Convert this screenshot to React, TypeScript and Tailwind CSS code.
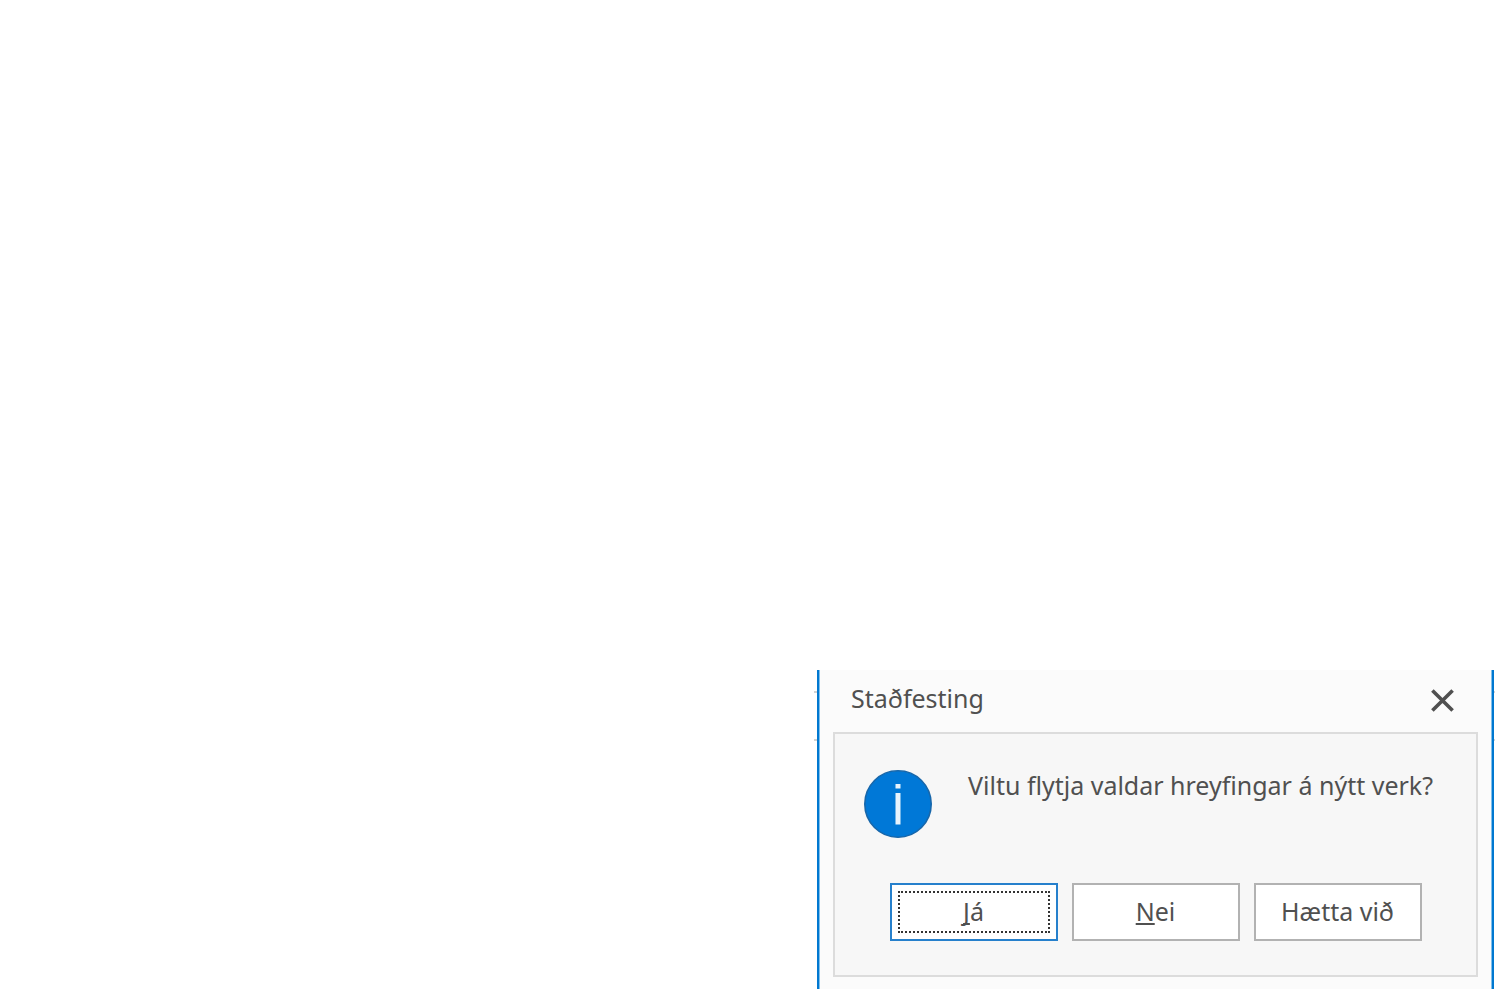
import { useState } from "react";

function EdgeMarks({ side }: { side: "left" | "right" }) {
  return (
    <div
      aria-hidden="true"
      className={
        side === "left"
          ? "flex w-[3px] flex-col gap-[46px] pt-[21px]"
          : "flex w-px flex-col gap-[46px] pt-[21px]"
      }
    >
      <span className="h-[2px] w-full bg-[#d2d2d2]" />
      <span className="h-[2px] w-full bg-[#d2d2d2]" />
    </div>
  );
}

function InfoIcon() {
  return (
    <svg aria-hidden="true" viewBox="0 0 68 68" className="size-[68px] shrink-0">
      <circle cx="34" cy="34" r="33.2" fill="#0078d7" stroke="#1767ab" strokeWidth="1.6" />
      <rect x="31.5" y="14" width="5" height="4.5" fill="#e8f3fc" />
      <rect x="31.5" y="23" width="5" height="31.5" fill="#e8f3fc" />
    </svg>
  );
}

function AccessKey({ children }: { children: string }) {
  return (
    <u className="decoration-2 underline-offset-2 [text-decoration-skip-ink:none]">{children}</u>
  );
}

const buttonClass =
  "h-[58px] w-[168px] border-2 border-[#b2b2b2] bg-white px-[6px] pt-[5px] pb-[7px] focus:outline-none";

export default function App() {
  const [open, setOpen] = useState(true);
  const close = () => setOpen(false);

  return (
    <main className="flex min-h-screen items-end justify-end bg-white font-['Noto_Sans','Open_Sans',sans-serif] text-[25px] leading-8 text-[#505050]">
      {open && (
        <div className="flex">
          <EdgeMarks side="left" />
          <section
            role="dialog"
            aria-labelledby="dialog-title"
            aria-describedby="dialog-message"
            className="border-x-2 border-[#0078d0] bg-[#fbfbfb]"
          >
            <div className="border-x border-[#80bfeb] px-[13px] pb-3">
              <header className="flex h-[62px] items-center justify-between pr-6 pb-[2px] pl-[18px]">
                <h1 id="dialog-title" className="pb-1">
                  Staðfesting
                </h1>
                <button type="button" aria-label="Loka" onClick={close} className="size-[23px]">
                  <svg viewBox="0 0 23 23" className="size-full" fill="none" stroke="#505050" strokeWidth="3.6">
                    <path d="M1.4 1.4 21.6 21.6M21.6 1.4 1.4 21.6" />
                  </svg>
                </button>
              </header>
              <div className="w-[645px] border-2 border-[#dcdcdc] bg-[#f7f7f7] pt-[35px] pb-[34px]">
                <div className="flex items-start gap-9 pl-[29px]">
                  <div className="pt-px">
                    <InfoIcon />
                  </div>
                  <p id="dialog-message" className="whitespace-nowrap">
                    Viltu flytja valdar hreyfingar á nýtt verk?
                  </p>
                </div>
                <div className="mt-[45px] flex justify-center gap-[14px]">
                  <button
                    type="button"
                    onClick={close}
                    className="h-[58px] w-[168px] border-2 border-[#2680cc] bg-white p-[6px] focus:outline-none"
                  >
                    <span className="flex h-full items-center justify-center border-2 border-dotted border-[#333333] pb-[2px]">
                      <span>
                        <AccessKey>J</AccessKey>á
                      </span>
                    </span>
                  </button>
                  <button type="button" onClick={close} className={buttonClass}>
                    <AccessKey>N</AccessKey>ei
                  </button>
                  <button type="button" onClick={close} className={buttonClass}>
                    Hætta við
                  </button>
                </div>
              </div>
            </div>
          </section>
          <EdgeMarks side="right" />
        </div>
      )}
    </main>
  );
}
